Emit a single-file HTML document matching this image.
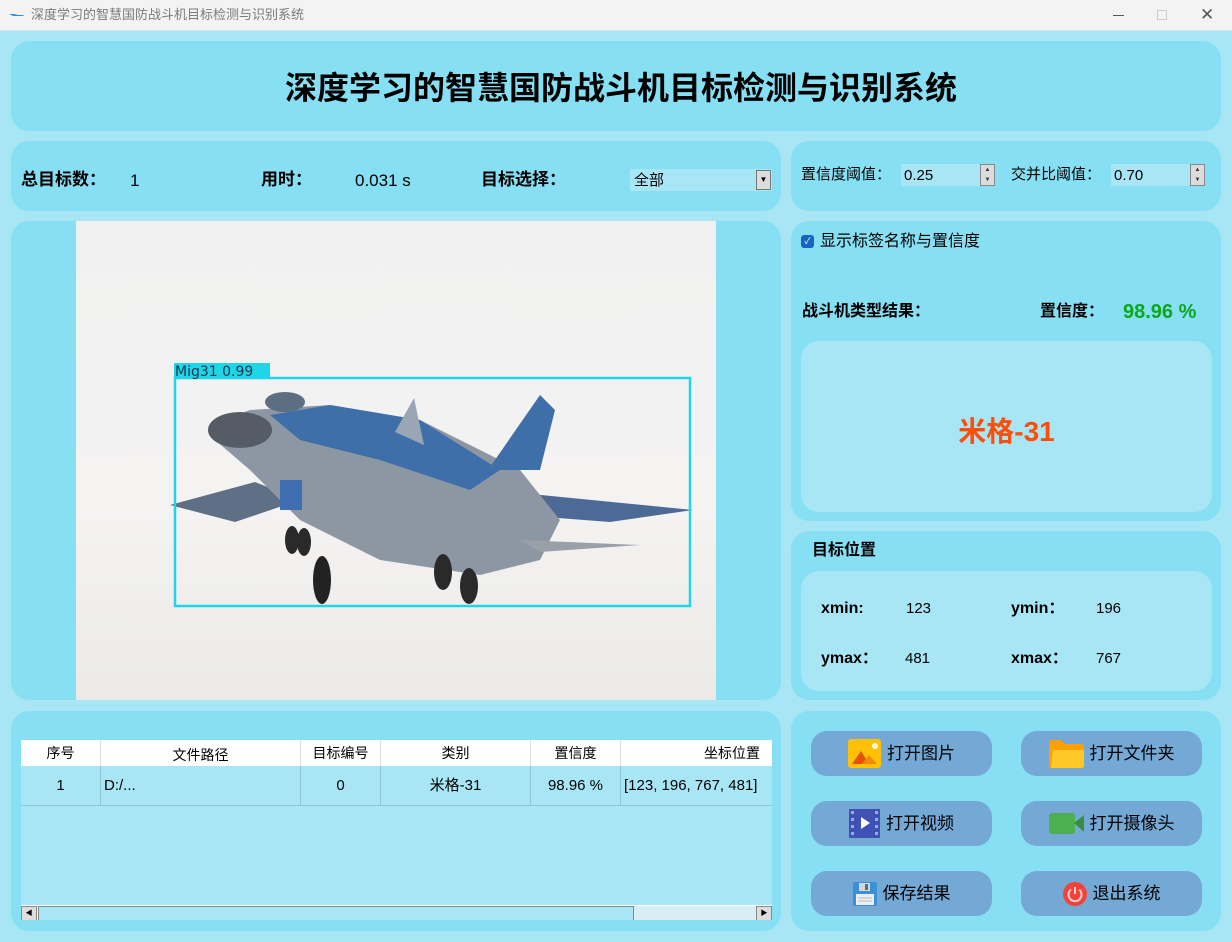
<!DOCTYPE html>
<html><head><meta charset="utf-8"><style>
*{margin:0;padding:0;box-sizing:border-box}
body{width:1232px;height:942px;position:relative;overflow:hidden;background:#a9e6f5;font-family:"Liberation Sans","Noto Sans CJK SC",sans-serif;color:#000;line-height:1}
.a{position:absolute}
.p{position:absolute;background:#87dff3;border-radius:18px}
.in{position:absolute;background:#a9e6f5;border-radius:18px}
.b{font-weight:bold}
.t{white-space:nowrap}
.btn{position:absolute;width:181px;height:45px;background:#74a9d6;border-radius:16px;font-size:17px;display:flex;align-items:center;justify-content:center;gap:6px}
.spin{position:absolute;width:15px;height:22px;background:#dcdcdc;border:1px solid #888;font-size:6px;text-align:center;line-height:10px;color:#333}
.tc{position:absolute;top:0;height:100%;border-right:1px solid #8ec6d6;display:flex;align-items:center;justify-content:center;font-size:14px}
</style></head><body>
<div class="a" style="left:0;top:0;width:1232px;height:31px;background:#f3f3f3;border-bottom:1px solid #d6e8ee"></div>
<svg class="a" style="left:9px;top:11px" width="16" height="8"><path d="M0 3 L4 5 L14 5 L15 4 L9 4 L5 3 Z" fill="#2a8fd6"/></svg>
<div class="a t" style="left:31px;top:8px;font-size:13px;color:#7a7a7a">深度学习的智慧国防战斗机目标检测与识别系统</div>
<div class="a" style="left:1113px;top:15px;width:11px;height:1px;background:#555"></div>
<div class="a" style="left:1157px;top:10px;width:10px;height:10px;border:1px solid #ccc"></div>
<div class="a t" style="left:1200px;top:6px;font-size:17px;color:#555">✕</div>

<div class="p" style="left:11px;top:41px;width:1210px;height:90px"></div>
<div class="a t b" style="left:0;top:72px;width:1242px;text-align:center;font-size:32px">深度学习的智慧国防战斗机目标检测与识别系统</div>

<div class="p" style="left:11px;top:141px;width:770px;height:70px"></div>
<div class="a t b" style="left:21px;top:171px;font-size:17px">总目标数：</div>
<div class="a t" style="left:130px;top:172px;font-size:17px">1</div>
<div class="a t b" style="left:261px;top:171px;font-size:17px">用时：</div>
<div class="a t" style="left:355px;top:172px;font-size:17px">0.031 s</div>
<div class="a t b" style="left:481px;top:171px;font-size:17px">目标选择：</div>
<div class="a" style="left:630px;top:169px;width:142px;height:22px;background:#a9e6f5"></div>
<div class="a t" style="left:634px;top:173px;font-size:15px">全部</div>
<div class="a" style="left:756px;top:170px;width:15px;height:20px;background:#ddd;border:1px solid #777;font-size:8px;text-align:center;line-height:18px">▼</div>

<div class="p" style="left:791px;top:141px;width:430px;height:70px"></div>
<div class="a t" style="left:801px;top:167px;font-size:15px">置信度阈值：</div>
<div class="a" style="left:901px;top:164px;width:80px;height:22px;background:#a9e6f5"></div>
<div class="a t" style="left:904px;top:168px;font-size:15px">0.25</div>
<div class="spin" style="left:980px;top:164px">▲<br>▼</div>
<div class="a t" style="left:1011px;top:167px;font-size:15px">交并比阈值：</div>
<div class="a" style="left:1111px;top:164px;width:80px;height:22px;background:#a9e6f5"></div>
<div class="a t" style="left:1114px;top:168px;font-size:15px">0.70</div>
<div class="spin" style="left:1190px;top:164px">▲<br>▼</div>

<div class="p" style="left:11px;top:221px;width:770px;height:479px"></div>
<div class="a" style="left:76px;top:221px;width:640px;height:479px;background:linear-gradient(180deg,#f1f1f1,#f4f3f2 60%,#ebeae8)"></div>
<svg class="a" style="left:76px;top:221px" width="640" height="479" viewBox="76 221 640 479">
<polygon points="170,505 255,482 300,500 235,522" fill="#5f6f86"/>
<polygon points="470,488 693,510 610,522 480,512" fill="#4c6a95"/>
<polygon points="210,425 250,410 330,405 420,420 520,470 560,520 540,560 480,575 380,560 300,520 250,470 215,440" fill="#8d97a3"/>
<polygon points="270,415 330,405 420,420 500,470 470,490 380,460 300,440" fill="#3f6fa8"/>
<polygon points="395,432 414,398 424,445" fill="#9aa6b4"/>
<polygon points="488,470 540,395 555,410 540,470" fill="#3f6fa8"/>
<polygon points="520,540 640,545 540,552" fill="#9aa0a8"/>
<ellipse cx="240" cy="430" rx="32" ry="18" fill="#555c66"/>
<ellipse cx="285" cy="402" rx="20" ry="10" fill="#5d6d82"/>
<rect x="280" y="480" width="22" height="30" fill="#3f6fb0"/>
<ellipse cx="292" cy="540" rx="7" ry="14" fill="#2a2a2a"/><ellipse cx="304" cy="542" rx="7" ry="14" fill="#2a2a2a"/>
<ellipse cx="322" cy="580" rx="9" ry="24" fill="#222"/>
<ellipse cx="443" cy="572" rx="9" ry="18" fill="#2a2a2a"/><ellipse cx="469" cy="586" rx="9" ry="18" fill="#2a2a2a"/>
<rect x="175" y="378" width="515" height="228" fill="none" stroke="#1fd6e8" stroke-width="2.5"/>
<rect x="174" y="363" width="96" height="15" fill="#1fd6e8"/>
<text x="175" y="376" font-family="DejaVu Sans" font-size="14" fill="#1e3550">Mig31 0.99</text>
</svg>

<div class="p" style="left:791px;top:221px;width:430px;height:300px"></div>
<div class="a" style="left:801px;top:235px;width:13px;height:13px;background:#1565c0;border-radius:3px;color:#fff;font-size:9px;text-align:center;line-height:13px">✓</div>
<div class="a t" style="left:820px;top:234px;font-size:16px">显示标签名称与置信度</div>
<div class="a t b" style="left:802px;top:304px;font-size:16px">战斗机类型结果：</div>
<div class="a t b" style="left:1040px;top:304px;font-size:16px">置信度：</div>
<div class="a t b" style="left:1123px;top:302px;font-size:20px;color:#0aa81a">98.96 %</div>
<div class="in" style="left:801px;top:341px;width:411px;height:171px"></div>
<div class="a t b" style="left:801px;top:418px;width:411px;text-align:center;font-size:28px;color:#ff4d0a">米格-31</div>

<div class="p" style="left:791px;top:531px;width:430px;height:169px"></div>
<div class="a t b" style="left:812px;top:543px;font-size:16px">目标位置</div>
<div class="in" style="left:801px;top:571px;width:411px;height:120px"></div>
<div class="a t b" style="left:821px;top:601px;font-size:16px">xmin:</div>
<div class="a t" style="left:906px;top:601px;font-size:15px">123</div>
<div class="a t b" style="left:1011px;top:601px;font-size:16px">ymin：</div>
<div class="a t" style="left:1096px;top:601px;font-size:15px">196</div>
<div class="a t b" style="left:821px;top:651px;font-size:16px">ymax：</div>
<div class="a t" style="left:905px;top:651px;font-size:15px">481</div>
<div class="a t b" style="left:1011px;top:651px;font-size:16px">xmax：</div>
<div class="a t" style="left:1096px;top:651px;font-size:15px">767</div>

<div class="p" style="left:11px;top:711px;width:770px;height:220px"></div>
<div class="a" style="left:21px;top:740px;width:751px;height:180px;background:#a9e6f5;overflow:hidden">
 <div class="a" style="left:0;top:0;width:751px;height:26px;background:#fff">
  <div class="tc" style="left:0;width:80px;border-color:#ddd">序号</div>
  <div class="tc" style="left:80px;width:200px;border-color:#ddd;padding-top:4px">文件路径</div>
  <div class="tc" style="left:280px;width:80px;border-color:#ddd">目标编号</div>
  <div class="tc" style="left:360px;width:150px;border-color:#ddd">类别</div>
  <div class="tc" style="left:510px;width:90px;border-color:#ddd">置信度</div>
  <div class="tc" style="left:600px;width:151px;border:none;justify-content:flex-end;padding-right:12px">坐标位置</div>
 </div>
 <div class="a" style="left:0;top:26px;width:751px;height:40px;border-bottom:1px solid #8ec6d6">
  <div class="tc" style="left:0;width:80px;font-size:15px">1</div>
  <div class="tc" style="left:80px;width:200px;font-size:15px;justify-content:flex-start;padding-left:3px">D:/...</div>
  <div class="tc" style="left:280px;width:80px;font-size:15px">0</div>
  <div class="tc" style="left:360px;width:150px;font-size:15px">米格-31</div>
  <div class="tc" style="left:510px;width:90px;font-size:15px">98.96 %</div>
  <div class="tc" style="left:600px;width:160px;border:none;font-size:15px;justify-content:flex-start;padding-left:3px">[123, 196, 767, 481]</div>
 </div>
 <div class="a" style="left:0;top:165px;width:751px;height:16px;background:#dfe;border-top:1px solid #fff">
  <div class="a" style="left:0;top:0;width:16px;height:15px;background:#ddd;border:1px solid #888;font-size:7px;text-align:center;line-height:13px">◀</div>
  <div class="a" style="left:17px;top:0;width:596px;height:15px;background:#a9e6f5;border:1px solid #888"></div>
  <div class="a" style="left:613px;top:0;width:122px;height:15px;background:#d8eef4"></div>
  <div class="a" style="left:735px;top:0;width:16px;height:15px;background:#ddd;border:1px solid #888;font-size:7px;text-align:center;line-height:13px">▶</div>
 </div>
</div>

<div class="p" style="left:791px;top:711px;width:430px;height:220px"></div>
<div class="btn" style="left:811px;top:731px"><svg width="33" height="29"><rect width="33" height="29" rx="3" fill="#ffc107"/><polygon points="4,25 13,12 21,25" fill="#e65100"/><polygon points="14,25 21,16 29,25" fill="#ef8a10"/><circle cx="27" cy="7" r="3" fill="#fff8e1"/></svg><span>打开图片</span></div>
<div class="btn" style="left:1021px;top:731px"><svg width="35" height="28"><path d="M0 3 Q0 0 3 0 H12 L16 4 H32 Q35 4 35 7 V26 Q35 28 32 28 H3 Q0 28 0 25Z" fill="#ffa000"/><path d="M4 10 H35 V25 Q35 28 32 28 H2 Z" fill="#ffca28"/></svg><span>打开文件夹</span></div>
<div class="btn" style="left:811px;top:801px"><svg width="31" height="29"><rect width="31" height="29" fill="#3f51b5"/><g fill="#9fa8da"><rect x="2" y="2" width="3" height="3"/><rect x="2" y="9" width="3" height="3"/><rect x="2" y="16" width="3" height="3"/><rect x="2" y="23" width="3" height="3"/><rect x="26" y="2" width="3" height="3"/><rect x="26" y="9" width="3" height="3"/><rect x="26" y="16" width="3" height="3"/><rect x="26" y="23" width="3" height="3"/></g><polygon points="12,8 21,14 12,20" fill="#fff"/></svg><span>打开视频</span></div>
<div class="btn" style="left:1021px;top:801px"><svg width="35" height="21"><rect width="26" height="21" rx="3" fill="#4caf50"/><polygon points="25,10 35,2 35,19" fill="#388e3c"/></svg><span>打开摄像头</span></div>
<div class="btn" style="left:811px;top:871px"><svg width="24" height="24"><rect width="24" height="24" rx="2" fill="#3d8fd6"/><rect x="6" y="1" width="11" height="8" fill="#cfd8dc"/><rect x="12" y="2" width="3" height="6" fill="#546e7a"/><rect x="3" y="12" width="18" height="11" fill="#eceff1"/><g stroke="#b0bec5"><line x1="5" y1="16" x2="19" y2="16"/><line x1="5" y1="19" x2="19" y2="19"/></g></svg><span>保存结果</span></div>
<div class="btn" style="left:1021px;top:871px"><svg width="24" height="24"><circle cx="12" cy="12" r="12" fill="#f44336"/><path d="M8 7.5 A6.5 6.5 0 1 0 16 7.5" fill="none" stroke="#ffcdd2" stroke-width="2"/><line x1="12" y1="5" x2="12" y2="12" stroke="#ffcdd2" stroke-width="2"/></svg><span>退出系统</span></div>
</body></html>
